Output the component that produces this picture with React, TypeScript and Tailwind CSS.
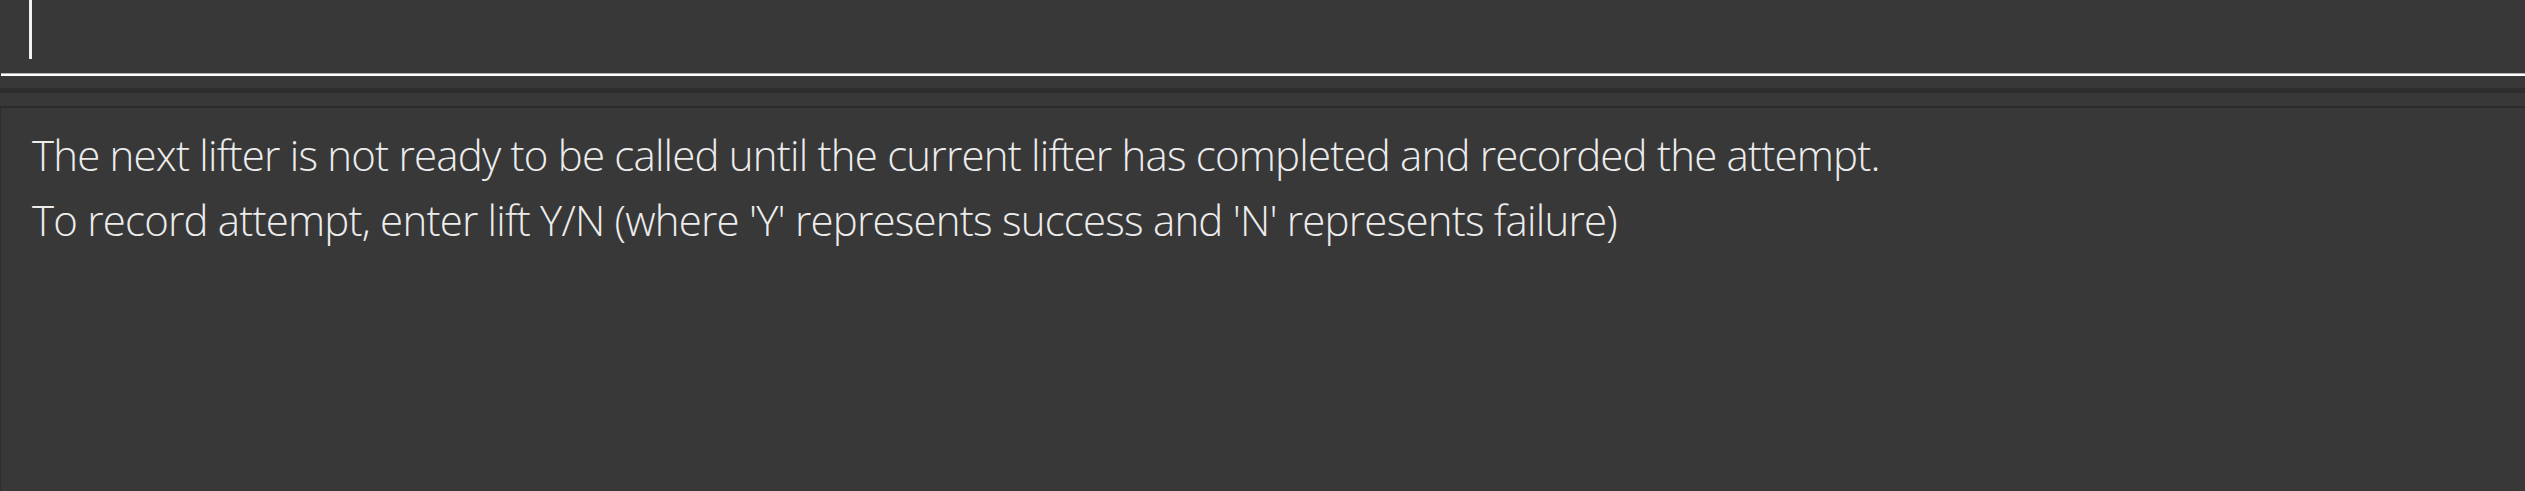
export default function App() {
  return (
    <div className="w-full h-[491px] bg-[#383838] flex flex-col overflow-hidden font-['Open_Sans',sans-serif]">
      {/* command box */}
      <div className="h-[73px] flex items-start">
        <div className="ml-[29px] w-[3px] h-[59px] bg-[#f2f2f2]" />
      </div>
      <div className="ml-px h-[3px] border-t border-[#b5b5b5] bg-white" />
      <div className="h-[12px]" />
      <div className="h-[5px] bg-[#2e2e2e]" />
      <div className="h-[13px]" />
      <div className="h-[2px] bg-[#2b2b2b]" />
      {/* result display */}
      <div className="flex-1 border-l border-[#2e2e2e] pl-[31px] pt-[14px] text-[42px] leading-[65px] tracking-[-0.8px] font-light text-[#ececec]">
        <p>The next lifter is not ready to be called until the current lifter has completed and recorded the attempt.</p>
        <p>To record attempt, enter lift Y/N (where 'Y' represents success and 'N' represents failure)</p>
      </div>
    </div>
  );
}
